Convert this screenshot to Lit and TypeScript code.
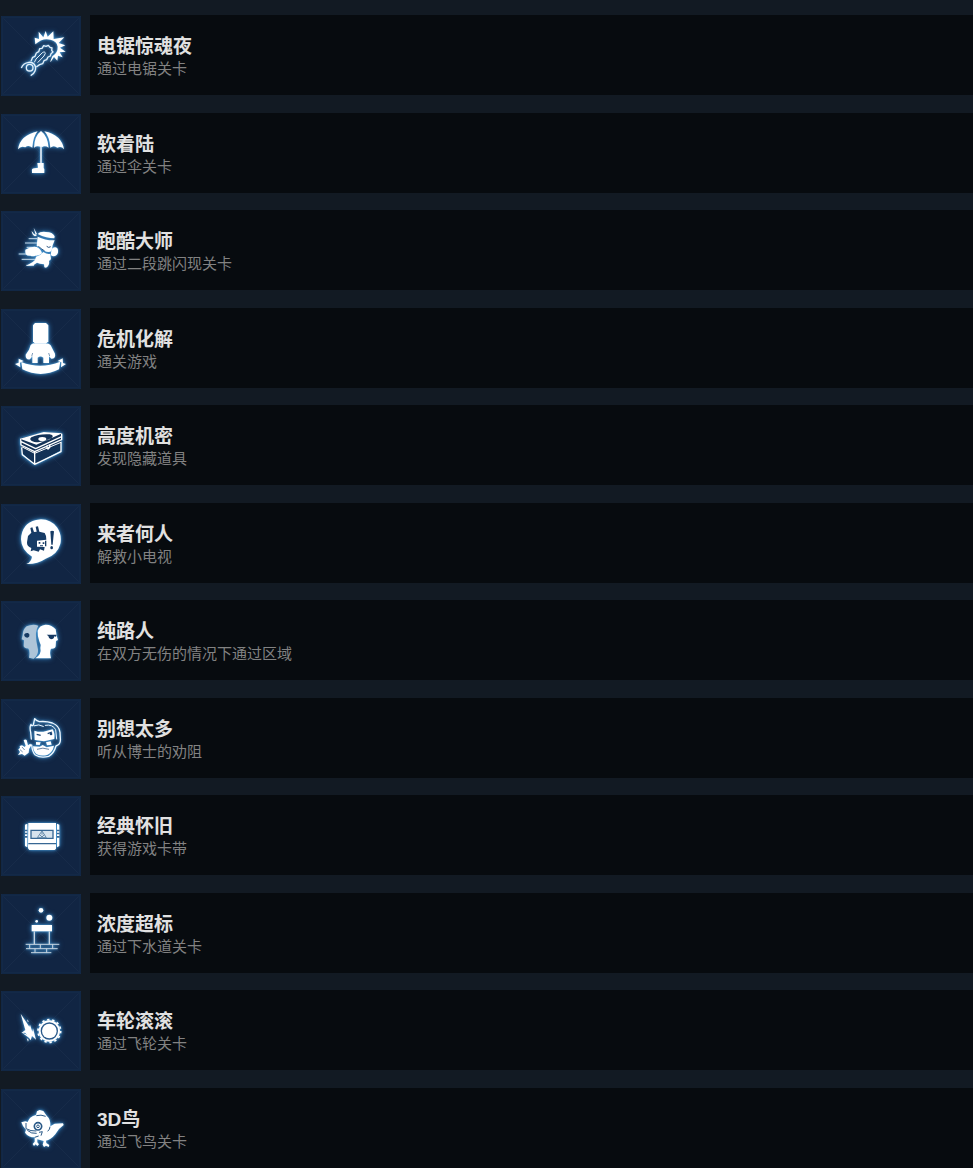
import { LitElement, html, svg, css, type TemplateResult } from "lit";
import { customElement, property } from "lit/decorators.js";

interface Achievement {
  title: string;
  note: string;
  top: number;
  art: TemplateResult;
}

const chainsaw = svg`
  <path d="M106 133 L104 113 L117 117 L116 95 L130 112 L137 93 L143 110 L160 94 L161 117 L193 112 L176 129 L196 136 L180 143 L197 155 L179 157 L188 172 L174 167 L172 182 L162 171 L152 186 L151 184 L157 169 Q174 158 173 140 Q171 123 151 119 Q127 113 106 133Z" fill="#fff"/>
  <g fill="none" stroke="#e4f0fa" stroke-width="4" stroke-linejoin="round">
    <path d="M93 184 L98 172 L105 169 L109 159 L116 155 L119 146 L126 145 L131 137 L138 139 L145 136 L150 142 L156 144 L155 151 L159 156 L153 161 L151 168 L144 171 L140 179 L132 182 L128 191 L119 194 L109 201"/>
    <path d="M103 187 L108 177 L127 158 Q135 153 136 160 L132 168 L113 188" stroke-width="3"/>
    <circle cx="89" cy="203" r="10"/>
    <path d="M64 204 Q70 190 83 188 Q94 184 102 192 Q110 202 105 213 Q102 222 92 227"/>
  </g>`;

const umbrella = svg`
  <g fill="#fff">
    <path d="M54 124 Q60 82 113 70 Q99 86 97 119 Q85 109 76 118 Q63 112 54 124Z"/>
    <path d="M102 119 Q103 84 123 69 Q143 84 146 119 Q134 111 124 119 Q113 111 102 119Z"/>
    <path d="M133 70 Q185 81 192 124 Q184 113 172 119 Q161 110 151 119 Q149 86 133 70Z"/>
    <path d="M120 116 H126 V166 H120Z" fill="#c5d6e6"/>
    <path d="M112 165 H131 V180 L133 183 V195 H96 V190 Q94 181 103 181 L114 179Z"/>
  </g>`;

const runner = svg`
  <g stroke="#c9dceb" stroke-width="3">
    <path d="M86 98H112 M75 111H112 M80 124H105 M56 144H84 M65 160H108 M79 178H102"/>
  </g>
  <g fill="#fff">
    <path d="M113 84 Q120 76 138 78 Q158 78 164 91 L163 97 Q140 97 113 84Z"/>
    <path d="M113 92 Q137 104 164 103 L158 118 L155 134 Q147 142 132 134 L110 119Z"/>
    <path d="M76 131 Q94 120 110 123 Q124 130 126 142 Q118 150 106 149 Q99 153 91 149 Q73 151 76 131Z"/>
    <path d="M157 127 Q166 120 173 128 Q177 140 169 148 Q161 154 153 148 Q152 137 157 127Z"/>
    <path d="M108 152 Q122 148 130 138 Q142 146 151 143 L152 152 Q155 161 147 164 Q150 178 138 185 L133 184 L132 175 Q118 174 111 170 L100 178 L79 179 L89 173 Q99 169 105 162Z"/>
    <path d="M101 65 L111 84 L107 87Z M95 75 Q99 84 111 88 L105 91 Q96 87 95 75Z"/>
  </g>
  <g fill="none" stroke="#2a5583" stroke-width="3">
    <path d="M140 121 Q146 127 152 122 M115 121 Q126 130 134 135"/>
  </g>`;

const statue = svg`
  <g fill="#fff">
    <path d="M99 64 L105 57 H138 L145 64 V112 L138 119 H105 L99 112Z"/>
    <path d="M92 123 Q99 116 106 119 H138 Q150 117 155 130 L165 149 Q168 164 154 164 L147 157 V177 H130 V161 Q121 154 113 161 V177 H97 V157 L90 166 Q76 168 77 152 L87 137Z"/>
    <path d="M64 174 Q121 197 181 173 L177 196 Q122 224 67 196Z"/>
    <path d="M56 164 L71 171 L60 176 L61 190 L45 180 L56 176Z M188 163 L173 171 L184 175 L183 190 L198 180 L189 177Z"/>
  </g>
  <path d="M98 147 L95 157 M146 147 L149 156" stroke="#3b6a98" stroke-width="2"/>`;

const chest = svg`
  <path d="M61 109 L133 91 L185 93 L184 109 L183 145 L104 188 L66 153Z" fill="#133257"/>
  <g fill="#fff">
    <path fill-rule="evenodd" d="M60 110 L131 90 L187 94 L109 128Z M94 106 Q84 114 103 120 Q128 123 149 112 Q168 101 149 97 Q116 95 94 106Z"/>
    <ellipse cx="127" cy="111" rx="12" ry="6"/>
  </g>
  <g fill="none" stroke="#fff" stroke-width="4" stroke-linejoin="round">
    <path d="M62 110 L63 129 L104 149 L185 113 L185 95 M65 136 L67 158 L104 187 L183 149 V119 M104 149 V187 M62 118 L107 140 L185 104"/>
    <path d="M65 134 L104 154 L183 121" stroke-width="3"/>
  </g>
  <path d="M139 131 L151 127 V137 L144 144 L139 139Z" fill="#fff"/>
  <path d="M143 134 L147 132" stroke="#194270" stroke-width="3"/>`;

const speech = svg`
  <path d="M123 58 Q154 59 171 82 Q187 105 181 132 Q172 165 137 176 Q112 193 79 192 Q94 186 96 170 Q64 151 63 118 Q65 70 108 60Z" fill="#fff"/>
  <path d="M91 84 L97 82 L102 96 L110 95 L107 80 L114 79 L118 95 L134 99 Q140 108 139 119 L111 122 L111 140 L134 141 L132 152 L120 148 L116 155 L101 151 L92 154 L94 144 Q80 140 81 127 L84 108 L94 98Z" fill="#163b65"/>
  <path d="M116 126 H121 V131 H116Z M128 127 H133 V132 H128Z M120 136 H129 V139 H120Z M135 122 H139 V139 H135Z" fill="#163b65"/>
  <path d="M151 94 L156 92 L162 94 L158 134 H154Z" fill="#163b65"/>
  <ellipse cx="155" cy="143" rx="4" ry="5" fill="#163b65"/>`;

const faces = svg`
  <path d="M115 86 Q99 79 80 88 Q68 98 68 114 L65 127 L72 130 L71 148 Q73 155 84 154 Q91 160 87 182 L101 185 Q118 171 113 153 Q107 130 108 108 Q109 96 115 86Z" fill="#adc4d8"/>
  <path d="M73 112 Q77 107 84 108 Q90 111 88 118 Q84 125 77 121 L73 117Z" fill="#163a63"/>
  <path d="M113 101 Q118 85 136 83 Q155 82 167 97 L170 116 L174 129 L168 132 L167 148 Q166 156 153 155 Q148 164 153 184 H106 Q126 171 121 153 Q124 143 118 133 Q112 118 113 101Z" fill="#fff"/>
  <path d="M140 113 L170 113 L168 119 L163 118 Q162 127 153 127 Q146 126 145 117Z" fill="#163a63"/>`;

const doctor = svg`
  <g fill="none" stroke="#eef7ff" stroke-width="4" stroke-linejoin="round" stroke-linecap="round">
    <path d="M94 132 L92 112 Q88 95 93 88 Q94 95 100 90 L104 71 Q108 77 118 80 Q139 78 157 84 Q178 92 180 112 L181 130 Q183 148 168 153 Q162 175 146 184 Q122 190 106 180 Q97 172 95 150"/>
    <path d="M103 92 Q116 86 130 94 M136 91 Q158 87 167 104 L170 132" stroke-width="3"/>
  </g>
  <g fill="#fff">
    <path d="M103 107 Q118 112 130 110 L158 103 Q165 114 163 132 L132 139 L104 135Z"/>
    <path d="M99 154 L119 155 L128 150 L140 157 L162 152 Q158 172 143 179 Q124 185 109 177 Q100 169 99 154Z"/>
    <path d="M108 141 L122 142 L119 150 L108 149Z M138 142 L152 139 L155 149 L141 151Z"/>
  </g>
  <g fill="none" stroke="#1c4675">
    <path d="M110 118 L122 121 M143 116 L156 111" stroke-width="4"/>
    <path d="M111 163 Q128 156 147 163" stroke-width="2"/>
  </g>
  <circle cx="153" cy="117" r="4" fill="#1c4675"/>
  <path d="M71 136 Q75 131 80 135 L84 151 L91 146 L94 151 Q85 162 86 173 L74 182 L66 177 L54 180 L60 171 L55 163 L60 159 L59 153 L66 151 L74 156 L77 152Z" fill="#fff"/>
  <path d="M66 156 L74 165 M60 164 L68 171" stroke="#2f5b88" stroke-width="2"/>`;

const cartridge = svg`
  <g fill="#fff">
    <path d="M85 93 H168 V170 L164 174 H88 L84 169Z"/>
    <path d="M75 98 L82 95 V166 L75 162Z M171 95 L178 98 V162 L171 166Z"/>
  </g>
  <g fill="#376794">
    <path d="M74 113H82V118H74Z M74 122H82V127H74Z M74 132H82V137H74Z M171 113H179V118H171Z M171 122H179V127H171Z M171 132H179V137H171Z M85 153H168V157H85Z"/>
  </g>
  <path d="M93 115H159V139H93Z" fill="#d7e3ed" stroke="#376794" stroke-width="4"/>
  <path d="M126 117 L139 137 H112Z M119 128 L126 135 L133 128 M126 119V128" fill="none" stroke="#668aa9" stroke-width="3"/>`;

const chimney = svg`
  <g fill="#fff">
    <circle cx="123" cy="61" r="7"/><circle cx="148" cy="83" r="9"/><circle cx="110" cy="94" r="4"/>
    <path d="M95 105H156V124H95Z"/>
  </g>
  <g fill="none" stroke="#c8d5e1" stroke-width="3">
    <path d="M103 124V163 M148 124V163" stroke-width="4"/>
    <path d="M77 163H178 M78 176H173 M93 188H154 M89 163V176 M121 163V176 M158 163V176 M105 176V188 M140 176V188"/>
  </g>`;

const wheel = svg`
  <g fill="#fff">
    <path d="M62 80 L88 119 L90 113 L97 134 L99 124 L108 158 L96 147 L92 160 L82 145 L75 137 L64 138 L76 129Z"/>
    <path d="M66 137 L86 145 L89 154Z M83 97 L86 105 L82 103Z M80 153 L86 158 L84 164Z"/>
  </g>
  <circle cx="148" cy="132" r="29" fill="#28588a" stroke="#fff" stroke-width="6"/>
  <circle cx="148" cy="132" r="34" fill="none" stroke="#fff" stroke-width="5" stroke-dasharray="7 8.26"/>
  <circle cx="148" cy="132" r="22" fill="#fff"/>`;

const bird = svg`
  <g fill="#fff">
    <path d="M108 111 L111 100 L119 96 L130 99 L140 113 Q153 124 151 145 L164 137 L189 136 L191 141 L177 153 L166 169 Q151 187 138 188 L139 195 L148 201 L146 207 L138 203 L132 207 L128 200 L131 189 L112 184 L112 193 L117 199 L112 204 L107 199 L102 204 L98 198 L104 191 L104 178 Q85 178 75 164 L78 155 Q68 147 64 133 L76 130 L83 132 Q88 115 108 111Z"/>
  </g>
  <g fill="none" stroke="#2a5987" stroke-width="3">
    <path d="M109 113 Q123 109 137 115 M78 135 V152 Q92 160 109 159 M82 157 Q94 168 110 166 M117 163 L127 161 L123 173 M150 146 Q150 154 143 160 M104 178 L116 174"/>
    <circle cx="114" cy="145" r="11" stroke-width="5"/>
    <circle cx="114" cy="145" r="4"/>
  </g>`;

const achievements: Achievement[] = [
  { title: "电锯惊魂夜", note: "通过电锯关卡", top: 48, art: chainsaw },
  { title: "软着陆", note: "通过伞关卡", top: 18, art: umbrella },
  { title: "跑酷大师", note: "通过二段跳闪现关卡", top: 15, art: runner },
  { title: "危机化解", note: "通关游戏", top: 15, art: statue },
  { title: "高度机密", note: "发现隐藏道具", top: 12, art: chest },
  { title: "来者何人", note: "解救小电视", top: 12, art: speech },
  { title: "纯路人", note: "在双方无伤的情况下通过区域", top: 12, art: faces },
  { title: "别想太多", note: "听从博士的劝阻", top: 12, art: doctor },
  { title: "经典怀旧", note: "获得游戏卡带", top: 12, art: cartridge },
  { title: "浓度超标", note: "通过下水道关卡", top: 12, art: chimney },
  { title: "车轮滚滚", note: "通过飞轮关卡", top: 12, art: wheel },
  { title: "3D鸟", note: "通过飞鸟关卡", top: 33, art: bird },
];

@customElement("achievement-row")
export class AchievementRow extends LitElement {
  @property({ attribute: false }) item!: Achievement;

  static styles = css`
    :host {
      display: flex;
      gap: 9px;
      height: 80px;
      padding-left: 1px;
    }
    .badge {
      flex: none;
      width: 80px;
      height: 80px;
      margin-top: 1px;
    }
    .glyph {
      filter: drop-shadow(0 0 3px rgba(90, 180, 240, 0.7))
        drop-shadow(0 0 8px rgba(60, 150, 220, 0.8));
    }
    .details {
      flex: 1;
      min-width: 0;
      box-sizing: border-box;
      padding: 20px 8px 0 7px;
      background: #070b0f;
    }
    .title,
    .note {
      margin: 0;
      white-space: nowrap;
      overflow: hidden;
      text-overflow: ellipsis;
    }
    .title {
      font-size: 19px;
      line-height: 24px;
      font-weight: 700;
      color: #e1e1e1;
    }
    .note {
      font-size: 15px;
      line-height: 19px;
      font-weight: 400;
      color: #828282;
    }
  `;

  render() {
    const { title, note, top, art } = this.item;
    return html`
      <svg class="badge" viewBox="0 0 240 240" aria-hidden="true">
        <rect width="240" height="240" fill="#112543" />
        <path d="M0 0L240 240M240 0L0 240" stroke="#172b49" stroke-width="3" />
        <rect x="4" y="4" width="232" height="232" fill="none" stroke="#132947" stroke-width="6" />
        <g class="glyph"><g transform="translate(-3 ${-top})">${art}</g></g>
      </svg>
      <div class="details">
        <h3 class="title">${title}</h3>
        <p class="note">${note}</p>
      </div>
    `;
  }
}

@customElement("app-root")
export class AppRoot extends LitElement {
  static styles = css`
    :host {
      display: block;
      min-height: 100vh;
      box-sizing: border-box;
      padding-top: 15px;
      overflow: hidden;
      background: #121a23;
      font-family: "Liberation Sans", "Noto Sans CJK SC", sans-serif;
    }
    .list {
      list-style: none;
      margin: 0;
      padding: 0;
    }
    .entry:nth-child(odd) {
      margin-bottom: 18px;
    }
    .entry:nth-child(even) {
      margin-bottom: 17px;
    }
    .list .entry:last-child {
      margin-bottom: 0;
    }
  `;

  render() {
    return html`
      <ul class="list">
        ${achievements.map(
          (item) => html`<li class="entry"><achievement-row .item=${item}></achievement-row></li>`,
        )}
      </ul>
    `;
  }
}
